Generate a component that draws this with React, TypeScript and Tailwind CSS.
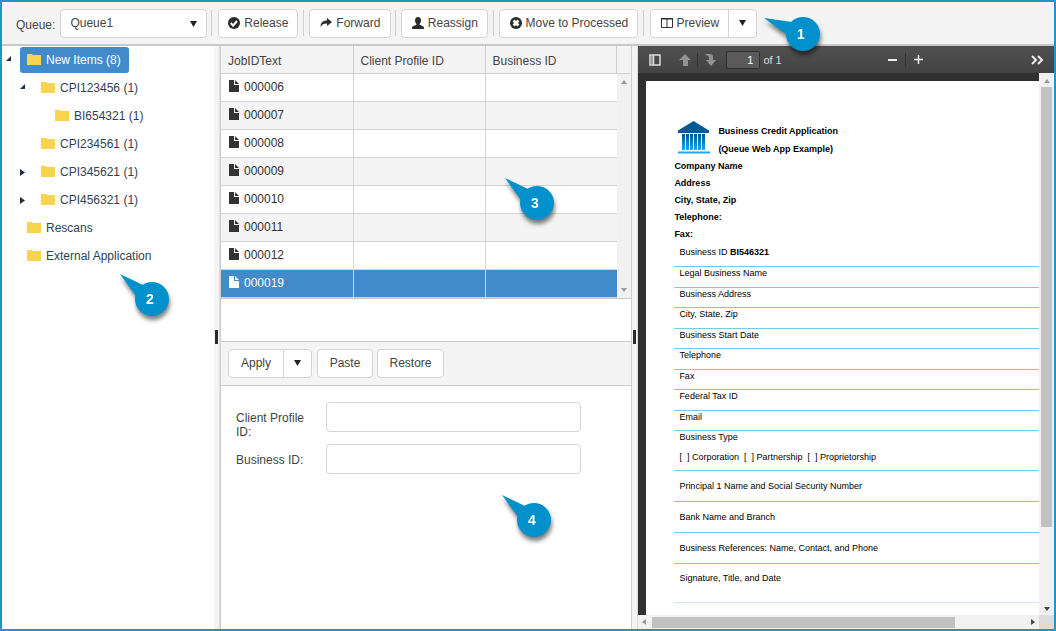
import type { ReactNode } from 'react';

const folders = [
    { label: 'New Items (8)', level: 0, arrow: 'open', active: true },
    { label: 'CPI123456 (1)', level: 1, arrow: 'open' },
    { label: 'BI654321 (1)', level: 2 },
    { label: 'CPI234561 (1)', level: 1 },
    { label: 'CPI345621 (1)', level: 1, arrow: 'closed' },
    { label: 'CPI456321 (1)', level: 1, arrow: 'closed' },
    { label: 'Rescans', level: 0 },
    { label: 'External Application', level: 0 },
];

const indents = ['pl-1', 'pl-[18px]', 'pl-8'];

const jobs = ['000006', '000007', '000008', '000009', '000010', '000011', '000012', '000019'];

const companyLines = ['Company Name', 'Address', 'City, State, Zip', 'Telephone:', 'Fax:'];

const shortFields = [
    'Legal Business Name',
    'Business Address',
    'City, State, Zip',
    'Business Start Date',
    'Telephone',
    'Fax',
    'Federal Tax ID',
    'Email',
];

const tallFields = [
    'Principal 1 Name and Social Security Number',
    'Bank Name and Branch',
    'Business References: Name, Contact, and Phone',
];

const button = 'flex h-[29px] items-center justify-center gap-1 rounded border border-[#d4d4d4] bg-white whitespace-nowrap';

function Caret() {
    return (
        <svg width="7" height="6" viewBox="0 0 7 6" fill="#222" aria-hidden="true">
            <path d="M0 0h7L3.5 6z" />
        </svg>
    );
}

function Icon({ children }: { children: ReactNode }) {
    return (
        <svg width="12" height="12" viewBox="0 0 12 12" fill="#2b2b2b" className="shrink-0" aria-hidden="true">
            {children}
        </svg>
    );
}

function Separator() {
    return <span className="h-[26px] w-px shrink-0 bg-[#d0d0d0]" />;
}

function Splitter() {
    return (
        <div className="flex w-[6px] shrink-0 items-center justify-center border-r border-[#dcdcdc] bg-[#f4f4f4]">
            <span className="mb-0.5 h-3.5 w-[3px] bg-[#2b2b2b]" />
        </div>
    );
}

function Callout({ num, place, tail = 'M-15-8L8 3L1 14z' }: { num: number; place: string; tail?: string }) {
    return (
        <div className={`absolute z-10 size-[34px] drop-shadow-[1px_4px_2px_rgba(0,0,0,0.5)] ${place}`}>
            <svg width="34" height="34" viewBox="0 0 34 34" fill="#0090cb" className="overflow-visible" aria-hidden="true">
                <path d={tail} />
                <circle cx="17" cy="17" r="17" />
            </svg>
            <span className="absolute inset-0 flex items-center justify-center pr-1 text-sm font-bold text-white">{num}</span>
        </div>
    );
}

function Toolbar() {
    return (
        <header className="flex h-11 shrink-0 items-center border-b-2 border-[#c9c9c9] bg-[#f4f4f4] pl-3.5">
            <label htmlFor="queue" className="mr-[5px] pt-1">Queue:</label>
            <div className="relative mr-1">
                <select id="queue" className="h-[29px] w-[147px] appearance-none rounded border border-[#d4d4d4] bg-white pl-[9px]">
                    <option>Queue1</option>
                </select>
                <span className="pointer-events-none absolute top-3 right-2.5"><Caret /></span>
            </div>
            <Separator />
            <button className={`${button} mr-[5px] ml-1.5 w-20`}>
                <Icon>
                    <circle cx="6" cy="6" r="6" />
                    <path d="M2.8 6l2.3 2.6L9 4" fill="none" stroke="#fff" strokeWidth="2" />
                </Icon>
                Release
            </button>
            <Separator />
            <button className={`${button} mr-1 ml-[5px] w-[82px]`}>
                <Icon>
                    <path d="M7 1l5 4-5 4V6.600C4 6.400 2 7.500.8 10 0 6 3 3.400 7 3.400z" />
                </Icon>
                Forward
            </button>
            <Separator />
            <button className={`${button} mr-[5px] ml-[5px] w-[87px]`}>
                <Icon>
                    <path d="M6 0c2 0 3 1.300 3 3.200 0 1.600-.8 3-1.400 3.600v1L11 9.300c.7.400 1 1 1 2.700H0c0-1.700.3-2.300 1-2.700l3.400-1.500v-1C3.800 6.200 3 4.800 3 3.200 3 1.300 4 0 6 0z" />
                </Icon>
                Reassign
            </button>
            <Separator />
            <button className={`${button} mr-[5px] ml-[5px] w-[139px]`}>
                <Icon>
                    <circle cx="6" cy="6" r="6" />
                    <path d="M3.600 3.600l4.800 4.800M8.400 3.600L3.600 8.400" stroke="#fff" strokeWidth="2.800" />
                </Icon>
                Move to Processed
            </button>
            <Separator />
            <div className="ml-1.5 flex">
                <button className={`${button} w-[79px] rounded-r-none`}>
                    <Icon>
                        <path d="M.5 1.500h11v9H.5zM6 1.500v9" fill="none" stroke="#333" />
                        <path d="M0 1h12v1.500H0z" />
                    </Icon>
                    Preview
                </button>
                <button aria-label="Preview options" className={`${button} -ml-px w-[29px] rounded-l-none`}><Caret /></button>
            </div>
        </header>
    );
}

function FolderTree() {
    return (
        <nav className="w-[212px] shrink-0">
            <ul>
                {folders.map((folder) => (
                    <li key={folder.label} className={`flex h-7 items-center ${indents[folder.level]}`}>
                        <span className="mb-1 w-3.5">
                            {folder.arrow === 'open' && (
                                <svg width="5" height="5" fill="#1f2f3f" aria-hidden="true"><path d="M5 0v5H0z" /></svg>
                            )}
                            {folder.arrow === 'closed' && (
                                <svg width="5" height="7" fill="#1f2f3f" className="mt-1" aria-hidden="true"><path d="M0 0l5 3.500L0 7z" /></svg>
                            )}
                        </span>
                        <a
                            href="#"
                            className={`flex h-[26px] items-center gap-[5px] rounded-[3px] pr-2 pl-[7px] ${folder.active ? 'bg-[#428bca] text-white' : 'text-[#2e4355]'}`}
                        >
                            <svg width="14" height="12" fill="#f8d44c" className="mb-0.5" aria-hidden="true">
                                <path d="M0 1h5l1 1h8v10H0z" />
                            </svg>
                            {folder.label}
                        </a>
                    </li>
                ))}
            </ul>
        </nav>
    );
}

function JobGrid() {
    return (
        <div className="flex border-b border-[#c9c9c9]">
            <table className="flex-1 table-fixed border-collapse text-left">
                <thead>
                    <tr className="h-[27px] bg-[#f4f4f4]">
                        <th className="w-[132px] border-r border-b border-[#cfcfcf] pt-1 pl-[7px] font-normal">JobIDText</th>
                        <th className="w-[132px] border-r border-b border-[#cfcfcf] pt-1 pl-[7px] font-normal">Client Profile ID</th>
                        <th className="border-r border-b border-[#cfcfcf] pt-1 pl-[7px] font-normal">Business ID</th>
                    </tr>
                </thead>
                <tbody>
                    {jobs.map((job) => (
                        <tr
                            key={job}
                            className={job === '000019' ? 'h-7 bg-[#428bca] text-white' : 'h-7 text-[#333] odd:bg-white even:bg-[#f4f4f4]'}
                        >
                            <td className="border-r border-b border-[#d4d4d4] pl-2">
                                <span className="flex items-center gap-[5px]">
                                    <svg width="10" height="12" fill="currentColor" className="mb-0.5" aria-hidden="true">
                                        <path d="M0 0h5v5h5v7H0zM6 0l4 4H6z" />
                                    </svg>
                                    {job}
                                </span>
                            </td>
                            <td className="border-r border-b border-[#d4d4d4]" />
                            <td className="border-b border-[#d4d4d4]" />
                        </tr>
                    ))}
                </tbody>
            </table>
            <div className="flex w-3.5 flex-col bg-[#f1f1f1]">
                <span className="h-7 border-b border-[#cfcfcf] bg-[#f4f4f4]" />
                <div className="flex flex-1 flex-col items-center justify-between pt-1.5 pb-1.5">
                    <svg width="6" height="4" fill="#999" aria-hidden="true"><path d="M0 4l3-4 3 4z" /></svg>
                    <svg width="6" height="4" fill="#999" aria-hidden="true"><path d="M0 0h6L3 4z" /></svg>
                </div>
            </div>
        </div>
    );
}

function IndexForm() {
    return (
        <form>
            <div className="flex h-[45px] items-center border-y border-[#c9c9c9] bg-[#f4f4f4] pl-[7px]">
                <button type="button" className={`${button} w-14 rounded-r-none`}>Apply</button>
                <button type="button" aria-label="Apply options" className={`${button} -ml-px w-[29px] rounded-l-none`}><Caret /></button>
                <button type="button" className={`${button} ml-[5px] w-14`}>Paste</button>
                <button type="button" className={`${button} ml-1 w-[67px]`}>Restore</button>
            </div>
            <div className="flex flex-col gap-3 pt-4 pr-[50px] pl-[15px]">
                <div className="flex h-[30px] items-start">
                    <label htmlFor="profile" className="w-[90px] pt-[9px] pr-2 leading-[14px]">Client Profile ID:</label>
                    <input id="profile" className="h-[30px] min-w-0 flex-1 rounded border border-[#d4d4d4] bg-white px-2" />
                </div>
                <div className="flex h-[30px] items-start">
                    <label htmlFor="business" className="w-[90px] pt-[9px] leading-[14px]">Business ID:</label>
                    <input id="business" className="h-[30px] min-w-0 flex-1 rounded border border-[#d4d4d4] bg-white px-2" />
                </div>
            </div>
        </form>
    );
}

function BankLogo() {
    return (
        <svg width="32" height="33" viewBox="0 0 32 33" aria-hidden="true">
            <defs>
                <linearGradient id="pillar" x1="0" y1="0" x2="0" y2="1">
                    <stop offset="0" stopColor="#00538f" />
                    <stop offset="1" stopColor="#18aef7" />
                </linearGradient>
            </defs>
            <path d="M15.500 0L31 9.500V12H0V9.500z" fill="#005a9a" />
            {[4, 8, 12, 16, 20, 24].map((x) => (
                <rect key={x} x={x} y="13" width="3" height="16" fill="url(#pillar)" />
            ))}
            <path d="M0 30.500h32v2H0z" fill="#24a9f2" />
        </svg>
    );
}

function Document() {
    return (
        <article className="min-w-0 flex-1 overflow-hidden bg-white pt-10 pl-7 text-[9px] text-black">
            <div className="flex gap-2 pl-1">
                <BankLogo />
                <div className="pt-px leading-[18px] font-bold">
                    <h1>Business Credit Application</h1>
                    <p>(Queue Web App Example)</p>
                </div>
            </div>
            <div className="leading-[17px] font-bold">
                {companyLines.map((line) => <p key={line}>{line}</p>)}
            </div>
            <p className="h-6 border-b border-[#7cc8e3] pl-[5px] leading-[18px]">Business ID <b>BI546321</b></p>
            <div className="flex h-[164px] flex-col">
                {shortFields.map((field) => (
                    <p key={field} className="flex-1 border-b border-[#7cc8e3] pl-[5px] leading-3">{field}</p>
                ))}
            </div>
            <div className="h-10 border-b border-[#7cc8e3] pl-[5px] leading-3">
                <p>Business Type</p>
                <p className="pt-2 whitespace-pre">[  ] Corporation  [  ] Partnership  [  ] Proprietorship</p>
            </div>
            <div className="flex h-[92px] flex-col">
                {tallFields.map((field) => (
                    <p key={field} className="flex-1 border-b border-[#7cc8e3] pl-[5px] leading-[30px]">{field}</p>
                ))}
            </div>
            <p className="h-10 border-b border-[#cdeaf5] pl-[5px] leading-[30px]">Signature, Title, and Date</p>
        </article>
    );
}

function Viewer() {
    return (
        <section className="flex min-w-0 flex-1 flex-col bg-[#333]">
            <div className="flex h-[27px] shrink-0 items-center bg-linear-to-b from-[#505050] to-[#434343] pl-[11px] text-[11px] text-[#ddd]">
                <button aria-label="Toggle sidebar" className="mr-[18px]">
                    <svg width="12" height="12" fill="none" stroke="#ddd" strokeWidth="1.500" aria-hidden="true">
                        <path d="M1 1h10v10H1zM4.500 1v10" />
                        <path d="M2 3h2M2 5h2M2 7h2M2 9h2" strokeWidth="1" />
                    </svg>
                </button>
                <button aria-label="Previous page">
                    <svg width="12" height="12" fill="#929292" aria-hidden="true"><path d="M6 0l6 6H9v6H4V6H0z" /></svg>
                </button>
                <span className="mx-[6px] h-3.5 w-px bg-[#333]" />
                <button aria-label="Next page" className="mr-2.5">
                    <svg width="12" height="12" fill="#929292" aria-hidden="true"><path d="M1 0h5c2 0 3 1 3 3v3h3l-5 6-5-6h3V3z" /></svg>
                </button>
                <input aria-label="Page" defaultValue="1" className="h-[18px] w-[34px] rounded-xs border border-[#303030] bg-[#5a5a5a] pr-1.5 text-right text-white" />
                <span className="ml-[3px]">of 1</span>
                <div className="ml-auto flex items-center gap-2">
                    <button aria-label="Zoom out">
                        <svg width="9" height="9" fill="#eee" aria-hidden="true"><path d="M0 4h9v2H0z" /></svg>
                    </button>
                    <span className="h-3.5 w-px bg-[#333]" />
                    <button aria-label="Zoom in">
                        <svg width="9" height="9" fill="#eee" aria-hidden="true"><path d="M0 4h4V0h1v4h4v1H5v4H4V5H0z" stroke="#eee" strokeWidth=".5" /></svg>
                    </button>
                </div>
                <button aria-label="Tools" className="mr-2.5 ml-[108px]">
                    <svg width="13" height="10" fill="none" stroke="#eee" strokeWidth="2" aria-hidden="true">
                        <path d="M1 1l4 4-4 4M7 1l4 4-4 4" />
                    </svg>
                </button>
            </div>
            <div className="flex min-h-0 flex-1">
                <div className="flex min-w-0 flex-1 border-t-8 border-l-8 border-[#303030]">
                    <Document />
                </div>
                <div className="flex w-[15px] flex-col items-center bg-[#f1f1f1] pt-1.5 pb-1">
                    <svg width="6" height="4" fill="#999" aria-hidden="true"><path d="M0 4l3-4 3 4z" /></svg>
                    <span className="mt-1 h-[440px] w-[11px] bg-[#c1c1c1]" />
                    <svg width="6" height="4" fill="#444" className="mt-auto" aria-hidden="true"><path d="M0 0h6L3 4z" /></svg>
                </div>
            </div>
            <div className="flex h-3.5 shrink-0 bg-[#dcdcdc] pr-[15px]">
                <div className="flex flex-1 items-center justify-between bg-[#f1f1f1] px-1">
                    <svg width="4" height="6" fill="#999" aria-hidden="true"><path d="M4 0v6L0 3z" /></svg>
                    <span className="mr-auto ml-1.5 h-[11px] w-[303px] bg-[#c1c1c1]" />
                    <svg width="4" height="6" fill="#444" aria-hidden="true"><path d="M0 0v6l4-3z" /></svg>
                </div>
            </div>
        </section>
    );
}

export default function App() {
    return (
        <div className="relative flex h-screen flex-col border-2 border-[#1797cc] bg-white font-['Liberation_Sans',Arial,sans-serif] text-[12px] leading-4 text-[#444]">
            <Toolbar />
            <main className="flex min-h-0 flex-1">
                <FolderTree />
                <Splitter />
                <section className="flex w-[39.2%] shrink-0 flex-col border-x border-[#cfcfcf]">
                    <JobGrid />
                    <div className="h-[42px]" />
                    <IndexForm />
                </section>
                <Splitter />
                <Viewer />
            </main>
            <Callout num={1} place="top-[15px] left-[784px]" tail="M-22 1L6 5L0 17z" />
            <Callout num={2} place="top-[280px] left-[133px]" />
            <Callout num={3} place="top-[184px] left-[518px]" />
            <Callout num={4} place="top-[501px] left-[515px]" />
        </div>
    );
}
